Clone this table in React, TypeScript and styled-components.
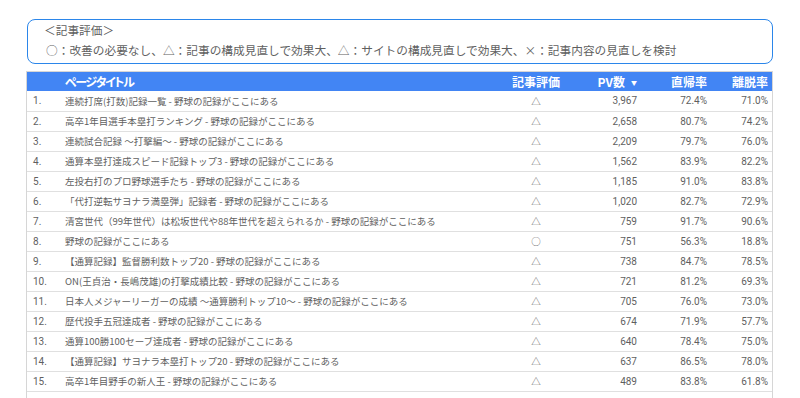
import styled, { createGlobalStyle } from "styled-components";

const GlobalStyle = createGlobalStyle`
    html, body {
        margin: 0;
        padding: 0;
        background: #ffffff;
    }
    body {
        font-family: "Noto Sans CJK JP", "Noto Sans", sans-serif;
    }
`;

const StyledPage = styled.div`
    width: 800px;
    height: 398px;
    overflow: hidden;
    padding: 19px 27px 0 26px;
    box-sizing: border-box;
`;

const StyledLegend = styled.section`
    border: 1.5px solid #2b86ea;
    border-radius: 8px;
    padding: 0 18px 3px;
    margin-left: 1px;
    color: #5f5f5f;
    font-size: 11.7px;
    line-height: 20px;
`;

const StyledLegendTitle = styled.div`
    margin-left: -2px;
`;

const StyledTableWrap = styled.div`
    margin-top: 7px;
    border: 1px solid #d6d6d6;
    border-bottom: none;
    padding-bottom: 20px;
`;

const StyledTable = styled.table`
    width: 100%;
    border-collapse: collapse;
    table-layout: fixed;
`;

const StyledHeadCell = styled.th<{ $align?: "left" | "center" | "right"; $tight?: boolean }>`
    background: #4285f4;
    color: #ffffff;
    font-weight: bold;
    font-size: 12px;
    font-feature-settings: "palt";
    letter-spacing: ${(p) => (p.$tight ? "-1.4px" : "0")};
    height: 19px;
    padding: 0 4px;
    text-align: ${(p) => p.$align ?? "left"};
    white-space: nowrap;
`;

const StyledRow = styled.tr`
    height: 20px;
    border-bottom: 1px solid #e0e0e0;
`;

const StyledCell = styled.td<{ $align?: "left" | "center" | "right" }>`
    color: #5f5f5f;
    font-size: 9.5px;
    padding: 0 4px;
    text-align: ${(p) => p.$align ?? "left"};
    white-space: nowrap;
    overflow: hidden;
`;

const StyledNumCell = styled(StyledCell)`
    font-family: Roboto, "Noto Sans", sans-serif;
    font-size: 10px;
`;

const StyledIndexCell = styled(StyledNumCell)`
    padding-left: 6px;
`;

const StyledSortArrow = styled.span`
    display: inline-block;
    font-size: 6px;
    margin-left: 6px;
    vertical-align: 2px;
`;

type Row = {
    title: string;
    grade: string;
    pv: string;
    bounce: string;
    exit: string;
};

const rows: Row[] = [
    { title: "連続打席(打数)記録一覧 - 野球の記録がここにある", grade: "△", pv: "3,967", bounce: "72.4%", exit: "71.0%" },
    { title: "高卒1年目選手本塁打ランキング - 野球の記録がここにある", grade: "△", pv: "2,658", bounce: "80.7%", exit: "74.2%" },
    { title: "連続試合記録 ～打撃編～ - 野球の記録がここにある", grade: "△", pv: "2,209", bounce: "79.7%", exit: "76.0%" },
    { title: "通算本塁打達成スピード記録トップ3 - 野球の記録がここにある", grade: "△", pv: "1,562", bounce: "83.9%", exit: "82.2%" },
    { title: "左投右打のプロ野球選手たち - 野球の記録がここにある", grade: "△", pv: "1,185", bounce: "91.0%", exit: "83.8%" },
    { title: "「代打逆転サヨナラ満塁弾」記録者 - 野球の記録がここにある", grade: "△", pv: "1,020", bounce: "82.7%", exit: "72.9%" },
    { title: "清宮世代（99年世代）は松坂世代や88年世代を超えられるか - 野球の記録がここにある", grade: "△", pv: "759", bounce: "91.7%", exit: "90.6%" },
    { title: "野球の記録がここにある", grade: "○", pv: "751", bounce: "56.3%", exit: "18.8%" },
    { title: "【通算記録】監督勝利数トップ20 - 野球の記録がここにある", grade: "△", pv: "738", bounce: "84.7%", exit: "78.5%" },
    { title: "ON(王貞治・長嶋茂雄)の打撃成績比較 - 野球の記録がここにある", grade: "△", pv: "721", bounce: "81.2%", exit: "69.3%" },
    { title: "日本人メジャーリーガーの成績 ～通算勝利トップ10～ - 野球の記録がここにある", grade: "△", pv: "705", bounce: "76.0%", exit: "73.0%" },
    { title: "歴代投手五冠達成者 - 野球の記録がここにある", grade: "△", pv: "674", bounce: "71.9%", exit: "57.7%" },
    { title: "通算100勝100セーブ達成者 - 野球の記録がここにある", grade: "△", pv: "640", bounce: "78.4%", exit: "75.0%" },
    { title: "【通算記録】サヨナラ本塁打トップ20 - 野球の記録がここにある", grade: "△", pv: "637", bounce: "86.5%", exit: "78.0%" },
    { title: "高卒1年目野手の新人王 - 野球の記録がここにある", grade: "△", pv: "489", bounce: "83.8%", exit: "61.8%" },
];

export default function App() {
    return (
        <>
            <GlobalStyle />
            <StyledPage>
                <StyledLegend>
                    <StyledLegendTitle>＜記事評価＞</StyledLegendTitle>
                    <div>
                        ○：改善の必要なし、△：記事の構成見直しで効果大、△：サイトの構成見直しで効果大、×：記事内容の見直しを検討
                    </div>
                </StyledLegend>
                <StyledTableWrap>
                    <StyledTable>
                        <colgroup>
                            <col style={{ width: 34 }} />
                            <col />
                            <col style={{ width: 60 }} />
                            <col style={{ width: 75 }} />
                            <col style={{ width: 70 }} />
                            <col style={{ width: 61 }} />
                        </colgroup>
                        <thead>
                            <tr>
                                <StyledHeadCell />
                                <StyledHeadCell $tight>ページタイトル</StyledHeadCell>
                                <StyledHeadCell $align="center">記事評価</StyledHeadCell>
                                <StyledHeadCell $align="right">
                                    PV数<StyledSortArrow>▼</StyledSortArrow>
                                </StyledHeadCell>
                                <StyledHeadCell $align="right">直帰率</StyledHeadCell>
                                <StyledHeadCell $align="right">離脱率</StyledHeadCell>
                            </tr>
                        </thead>
                        <tbody>
                            {rows.map((row, i) => (
                                <StyledRow key={i}>
                                    <StyledIndexCell>{i + 1}.</StyledIndexCell>
                                    <StyledCell>{row.title}</StyledCell>
                                    <StyledCell $align="center">{row.grade}</StyledCell>
                                    <StyledNumCell $align="right">{row.pv}</StyledNumCell>
                                    <StyledNumCell $align="right">{row.bounce}</StyledNumCell>
                                    <StyledNumCell $align="right">{row.exit}</StyledNumCell>
                                </StyledRow>
                            ))}
                        </tbody>
                    </StyledTable>
                </StyledTableWrap>
            </StyledPage>
        </>
    );
}
